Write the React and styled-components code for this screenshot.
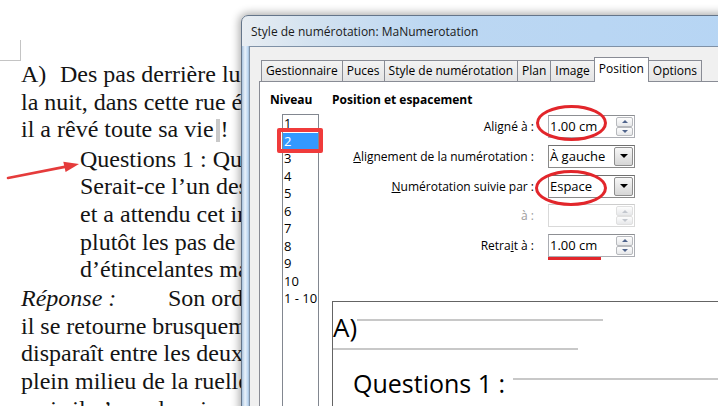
import React from 'react'
import styled, { createGlobalStyle } from 'styled-components'

const GlobalStyle = createGlobalStyle`
  html, body { margin: 0; padding: 0; background: #fff; }
  body { width: 718px; height: 406px; overflow: hidden; }
`

const Screen = styled.div`
  position: relative;
  width: 718px;
  height: 406px;
  overflow: hidden;
  background: #fff;
`

/* ---- document behind the dialog ---- */

const Doc = styled.div`
  padding-top: 40px;
  font-family: "Liberation Serif", "Times New Roman", serif;
  font-size: 24px;
  color: #141414;
`

const Corner = styled.div`
  width: 20px;
  height: 20px;
  border-right: 1px solid #c4c4c4;
  border-bottom: 1px solid #c4c4c4;
`

const Para = styled.div`
  padding-left: ${({ $indent }) => $indent || 21}px;
  margin-top: ${({ $gap }) => $gap || 0}px;
`

const Line = styled.div`
  height: 27.6px;
  line-height: 27.6px;
  white-space: nowrap;
`

const Num = styled.span`
  display: inline-block;
  width: ${({ $w }) => $w}px;
  font-style: ${({ $italic }) => ($italic ? 'italic' : 'normal')};
`

const FieldShade = styled.span`
  display: inline-block;
  width: 4px;
  height: 23px;
  margin: 0 1px 0 2px;
  vertical-align: -5px;
  background: #c9c9c9;
`

/* ---- dialog window ---- */

const Window = styled.div`
  position: absolute;
  left: 241px;
  top: 15px;
  width: 520px;
  height: 430px;
  z-index: 2;
  display: flex;
  flex-direction: column;
  border: 1px solid #64758a;
  border-radius: 7px 7px 0 0;
  background: linear-gradient(90deg, #e8edf2 0px, #d3e2f0 70px, #bcd7f2 190px, #b6d5f4 100%);
  box-shadow: 0 0 9px 2px rgba(0, 0, 0, 0.33);
  font-family: "Open Sans", "Noto Sans", sans-serif;
  font-size: 12px;
  color: #000;
`

const TitleBar = styled.div`
  height: 30px;
  padding-left: 9px;
  display: flex;
  align-items: center;
  white-space: nowrap;
  font-size: 12px;
  color: #1a1a1a;
`

const Frame = styled.div`
  flex: 1;
  display: flex;
`

const SideEdge = styled.div`
  width: 7px;
  background: linear-gradient(90deg, #aac4de, #eaf2fb 45%, #c4dbf2 80%, #9fbcda);
`

const Client = styled.div`
  flex: 1;
  display: flex;
  flex-direction: column;
  padding: 10px 0 0 9px;
  background: #f0f0f0;
  border-top: 1px solid #7f91a6;
  border-left: 1px solid #7f91a6;
`

const TabRow = styled.div`
  display: flex;
  align-items: flex-end;
  height: 24px;
  margin-left: 2px;
`

const Tab = styled.div`
  position: relative;
  z-index: ${({ $active }) => ($active ? 1 : 0)};
  box-sizing: border-box;
  height: ${({ $active }) => ($active ? 25 : 21)}px;
  margin-bottom: ${({ $active }) => ($active ? -1 : 0)}px;
  margin-right: -1px;
  padding: ${({ $active }) => ($active ? '3px 4px 0' : '2px 4px 0')};
  border: 1px solid #898c95;
  border-bottom: none;
  background: ${({ $active }) => ($active ? '#fff' : 'linear-gradient(#f3f3f3, #e4e4e4)')};
  line-height: 16px;
  white-space: nowrap;
`

const Panel = styled.div`
  flex: 1;
  display: grid;
  grid-template-columns: 62px 1fr;
  padding: 10px 0 0 10px;
  background: #fff;
  border: 1px solid #898c95;
  border-right: none;
`

const Column = styled.div`
  display: flex;
  flex-direction: column;
`

const Heading = styled.div`
  font-weight: 700;
  line-height: 15px;
  white-space: nowrap;
`

const ListBox = styled.div`
  flex: 1;
  box-sizing: border-box;
  width: 37px;
  margin: 7px 0 0 12px;
  border: 1px solid #828790;
  font-size: 13px;
`

const ListItem = styled.div`
  height: 17.5px;
  line-height: 17.5px;
  padding-left: 1px;
  white-space: nowrap;
  background: ${({ $selected }) => ($selected ? '#3399ff' : 'transparent')};
  color: ${({ $selected }) => ($selected ? '#fff' : '#000')};
`

const Form = styled.div`
  display: grid;
  grid-template-columns: 202px 87px;
  grid-auto-rows: 23px;
  column-gap: 14px;
  row-gap: 6.75px;
  margin-top: 8px;
`

const Label = styled.div`
  justify-self: end;
  align-self: center;
  white-space: nowrap;
  color: ${({ $disabled }) => ($disabled ? '#9c9c9c' : '#000')};
`

const Field = styled.div`
  box-sizing: border-box;
  display: flex;
  height: 23px;
  background: #fff;
  border: 1px solid ${({ $disabled, $select }) => ($disabled ? '#d9d9d9' : $select ? '#8a8a8a' : '#abadb3')};
  border-top-color: ${({ $disabled, $select }) => ($disabled ? '#cdcdcd' : $select ? '#707070' : '#8d8f93')};
  font-size: 13px;
`

const Value = styled.span`
  flex: 1;
  padding-left: 1px;
  line-height: 21px;
  white-space: nowrap;
`

const Spin = styled.div`
  display: flex;
  flex-direction: column;
  width: 17px;
  padding: 1px;
`

const SpinButton = styled.div`
  flex: 1;
  display: flex;
  align-items: center;
  justify-content: center;
  border: 1px solid ${({ $disabled }) => ($disabled ? '#e0e0e0' : '#b7b9bd')};
  border-radius: 2px;
  background: linear-gradient(#fdfdfd, #e7e8ea);

  &::after {
    content: '';
    border-left: 3px solid transparent;
    border-right: 3px solid transparent;
    ${({ $down, $disabled }) =>
      `${$down ? 'border-top' : 'border-bottom'}: 3px solid ${$disabled ? '#c3c7ce' : '#50648c'};`}
  }
`

const DropButton = styled.div`
  width: 17px;
  margin: 1px;
  display: flex;
  align-items: center;
  justify-content: center;
  border: 1px solid #8e8e8e;
  border-radius: 2px;
  background: linear-gradient(#f7f7f7, #d6d6d6);

  &::after {
    content: '';
    border-left: 4px solid transparent;
    border-right: 4px solid transparent;
    border-top: 4px solid #000;
  }
`

const Preview = styled.div`
  flex: 1;
  margin-top: 44px;
  border: 1px solid #646464;
  border-right: none;
  display: flex;
  flex-direction: column;
`

const PreviewRow = styled.div`
  display: flex;
  align-items: flex-start;
  margin-top: ${({ $gap }) => $gap}px;
  padding-left: ${({ $indent }) => $indent || 0}px;
  font-size: ${({ $size }) => $size || 26}px;
  line-height: 30px;
  white-space: nowrap;
`

const Rule = styled.span`
  display: block;
  height: 2px;
  margin-top: ${({ $top }) => $top || 0}px;
  margin-left: ${({ $left }) => $left || 0}px;
  background: #c8c8c8;
  ${({ $w }) => ($w ? `width: ${$w}px;` : 'flex: 1;')}
`

/* ---- red marks over the dialog ---- */

const Ring = styled.div`
  position: absolute;
  z-index: 3;
  left: ${({ $x }) => $x}px;
  top: ${({ $y }) => $y}px;
  width: ${({ $w }) => $w}px;
  height: ${({ $h }) => $h}px;
  box-sizing: border-box;
  border: 3px solid #e2262b;
  border-radius: 50%;
`

const Box = styled.div`
  position: absolute;
  z-index: 3;
  left: 277px;
  top: 128px;
  width: 46px;
  height: 25px;
  box-sizing: border-box;
  border: 4px solid #f03b3b;
  border-radius: 2px;
`

const Underline = styled.div`
  position: absolute;
  z-index: 3;
  left: 548px;
  top: 257px;
  width: 53px;
  height: 3px;
  background: #e2262b;
`

const Arrow = styled.svg`
  position: absolute;
  z-index: 3;
  left: 0;
  top: 150px;
`

const SpinBox = ({ value, disabled }) => (
  <Field $disabled={disabled}>
    <Value>{value}</Value>
    <Spin>
      <SpinButton $disabled={disabled} />
      <SpinButton $down $disabled={disabled} />
    </Spin>
  </Field>
)

const Select = ({ value }) => (
  <Field $select>
    <Value>{value}</Value>
    <DropButton />
  </Field>
)

const tabs = ['Gestionnaire', 'Puces', 'Style de numérotation', 'Plan', 'Image', 'Position', 'Options']
const levels = ['1', '2', '3', '4', '5', '6', '7', '8', '9', '10', '1 - 10']

export default function App() {
  return (
    <Screen>
      <GlobalStyle />
      <Doc>
        <Corner />
        <Para>
          <Line><Num $w={39}>A)</Num>Des pas derrière lui résonnent dans</Line>
          <Line>la nuit, dans cette rue étroite où</Line>
          <Line>il a rêvé toute sa vie<FieldShade />!</Line>
        </Para>
        <Para $indent={80} $gap={2}>
          <Line>Questions 1 : Qui le suit ainsi ?</Line>
          <Line>Serait-ce l’un des siens</Line>
          <Line>et a attendu cet instant</Line>
          <Line>plutôt les pas de</Line>
          <Line>d’étincelantes mains</Line>
        </Para>
        <Para $gap={1.5}>
          <Line><Num $w={147} $italic>Réponse :</Num>Son ordre</Line>
          <Line>il se retourne brusquement</Line>
          <Line>disparaît entre les deux murs</Line>
          <Line>plein milieu de la ruelle</Line>
          <Line>mais il n’y a plus rien</Line>
        </Para>
      </Doc>

      <Arrow width="90" height="40" viewBox="0 150 90 40">
        <line x1="8" y1="178" x2="66" y2="166.6" stroke="#e53b3b" strokeWidth="2.6" strokeLinecap="round" />
        <polygon points="79,164 63.3,161.8 65.6,172" fill="#e53b3b" />
      </Arrow>

      <Window>
        <TitleBar>Style de numérotation: MaNumerotation</TitleBar>
        <Frame>
          <SideEdge />
          <Client>
            <TabRow>
              {tabs.map((t) => (
                <Tab key={t} $active={t === 'Position'}>{t}</Tab>
              ))}
            </TabRow>
            <Panel>
              <Column>
                <Heading>Niveau</Heading>
                <ListBox>
                  {levels.map((l) => (
                    <ListItem key={l} $selected={l === '2'}>{l}</ListItem>
                  ))}
                </ListBox>
              </Column>
              <Column>
                <Heading>Position et espacement</Heading>
                <Form>
                  <Label>Aligné à :</Label>
                  <SpinBox value="1.00 cm" />
                  <Label><u>A</u>lignement de la numérotation :</Label>
                  <Select value="À gauche" />
                  <Label><u>N</u>umérotation suivie par :</Label>
                  <Select value="Espace" />
                  <Label $disabled>à :</Label>
                  <SpinBox value="" disabled />
                  <Label>Retra<u>i</u>t à :</Label>
                  <SpinBox value="1.00 cm" />
                </Form>
                <Preview>
                  <PreviewRow $gap={10}>
                    A)<Rule $w={246} $top={7} $left={0} />
                  </PreviewRow>
                  <PreviewRow $gap={6}>
                    <Rule $w={245} />
                  </PreviewRow>
                  <PreviewRow $gap={18} $indent={20} $size={25}>
                    Questions 1 :<Rule $top={10} $left={8} />
                  </PreviewRow>
                </Preview>
              </Column>
            </Panel>
          </Client>
        </Frame>
      </Window>

      <Box />
      <Ring $x={536} $y={105} $w={71} $h={36} />
      <Ring $x={535} $y={170} $w={72} $h={36} />
      <Underline />
    </Screen>
  )
}
